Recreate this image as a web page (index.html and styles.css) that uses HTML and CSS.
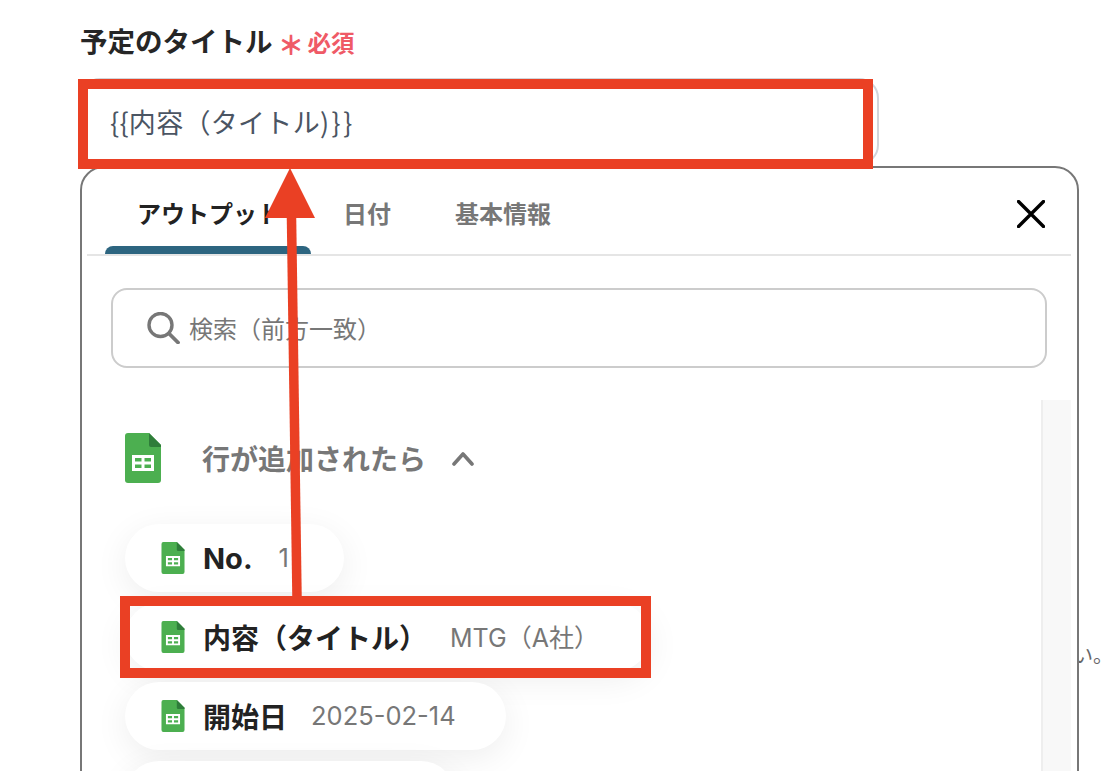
FILE: index.html
```html
<!DOCTYPE html>
<html lang="ja">
<head>
<meta charset="utf-8">
<title>予定のタイトル</title>
<link rel="stylesheet" href="styles.css">
</head>
<body>
<svg class="defs" width="0" height="0" aria-hidden="true">
  <symbol id="sheet" viewBox="0 0 36 50">
    <path d="M3 0H24L36 12V47a3 3 0 0 1-3 3H3a3 3 0 0 1-3-3V3a3 3 0 0 1 3-3Z" fill="#4caf50"/>
    <path d="M24 0L36 12V14H26a2 2 0 0 1-2-2Z" fill="#2f7d3a"/>
    <path d="M7 22H29V38H7ZM10 25V28.500H16.500V25ZM19.500 25V28.500H26V25ZM10 31.500V35H16.500V31.500ZM19.500 31.500V35H26V31.500Z" fill="#fff" fill-rule="evenodd"/>
  </symbol>
</svg>
<div class="behind-text">い。</div>
<main class="page">
  <div class="field-label">
    <span class="label-text">予定のタイトル</span>
    <span class="req-mark">＊</span>
    <span class="req-text">必須</span>
  </div>
  <div class="title-input"><span>{{内容（タイトル<span class="tail">)}}</span></span></div>
  <section class="panel">
    <header class="tabs">
      <div class="tab tab-active">アウトプット</div>
      <div class="tab">日付</div>
      <div class="tab">基本情報</div>
      <svg class="close" width="28" height="28" viewBox="0 0 28 28"><path d="M1.500 1.500L26.500 26.500M26.500 1.500L1.500 26.500" stroke="#000" stroke-width="3.400" stroke-linecap="round"/></svg>
    </header>
    <div class="search">
      <svg class="search-icon" width="33" height="32" viewBox="0 0 33 32"><circle cx="13.500" cy="13" r="11.500" fill="none" stroke="#777" stroke-width="3.400"/><path d="M22 21.500L31 30.500" stroke="#777" stroke-width="3.800" stroke-linecap="round"/></svg>
      <span class="search-text">検索（前方一致）</span>
    </div>
    <div class="list-area">
      <div class="list">
        <div class="group-head">
          <svg class="group-icon" width="36" height="50"><use href="#sheet"/></svg>
          <span class="group-title">行が追加されたら</span>
          <svg class="chevron" width="24" height="16" viewBox="0 0 24 16"><path d="M3 14L12 4L21 14" fill="none" stroke="#777" stroke-width="3.600" stroke-linecap="round" stroke-linejoin="round"/></svg>
        </div>
        <div class="pill pill-no">
          <svg class="pill-icon" width="24" height="32"><use href="#sheet"/></svg>
          <b class="pill-name">No.</b><span class="pill-value">1</span>
        </div>
        <div class="pill pill-title">
          <svg class="pill-icon" width="24" height="32"><use href="#sheet"/></svg>
          <b class="pill-name">内容（タイトル）</b><span class="pill-value">MTG（A社）</span>
        </div>
        <div class="pill pill-date">
          <svg class="pill-icon" width="24" height="32"><use href="#sheet"/></svg>
          <b class="pill-name">開始日</b><span class="pill-value">2025-02-14</span>
        </div>
        <div class="pill pill-next"></div>
      </div>
      <div class="scroll-track"></div>
    </div>
  </section>
</main>
<div class="mark mark-top"></div>
<div class="mark mark-bottom"></div>
<svg class="arrow" width="60" height="432" viewBox="0 0 60 432"><path d="M26.500 50L32 429" stroke="#ea4024" stroke-width="9.500"/><path d="M25 0L50 50H0Z" fill="#ea4024"/></svg>
</body>
</html>
```
FILE: styles.css
```css
* { box-sizing: border-box; }
html, body { margin: 0; height: 771px; overflow: hidden; background: #fff; }
body {
  position: relative;
  font-family: "Inter", "Noto Sans CJK JP", sans-serif;
  color: #222;
}
.defs { position: absolute; }
.page { position: relative; padding: 24px 25px 0 80px; }

.field-label { display: flex; align-items: center; height: 36px; }
.label-text { font-size: 27.500px; font-weight: 700; line-height: 36px; color: #262626; }
.req-mark { margin: 8px 4px 0 6px; font-size: 26px; line-height: 30px; font-weight: 900; color: #ef5a66; width: 25px; display: flex; justify-content: center; }
.req-text { font-size: 23.500px; font-weight: 700; color: #ef5a66; }

.title-input {
  margin-top: 18px;
  width: 799px;
  height: 87px;
  border: 2px solid #d1d5db;
  border-radius: 20px;
  padding: 0 28px;
  display: flex;
  align-items: center;
  font-family: "Noto Sans CJK JP", sans-serif;
  font-size: 27px;
  letter-spacing: 0.3px;
  color: #4b5563;
}
.tail { letter-spacing: 2.500px; }

.panel {
  margin-top: 1px;
  height: 640px;
  border: 2px solid #777;
  border-radius: 24px;
  padding: 0 6px 0 5px;
  background: #fff;
}
.tabs {
  display: flex;
  align-items: center;
  height: 88px;
  padding: 0 18px;
  border-bottom: 2px solid #e5e5e5;
  position: relative;
}
.tab {
  height: 86px;
  display: flex;
  align-items: center;
  padding: 2px 32px 0;
  font-size: 24px;
  font-weight: 700;
  color: #777;
}
.tab-active { color: #222; position: relative; padding-right: 30px; }
.tab-active::after {
  content: "";
  position: absolute;
  left: 0;
  right: 0;
  bottom: 0;
  height: 8px;
  background: #2d6580;
  border-radius: 8px 8px 0 0;
}
.close { margin-left: auto; margin-right: 8px; margin-top: 6px; }

.search {
  margin: 32px 24px 0 24px;
  height: 80px;
  border: 2px solid #ccc;
  border-radius: 16px;
  display: flex;
  align-items: center;
  padding: 0 34px;
  gap: 9px;
  font-size: 24px;
  color: #777;
}
.search-text { margin-bottom: 2px; }

.list-area { display: flex; margin-top: 32px; }
.list { flex: 1; padding: 33px 0 0 38px; min-width: 0; }
.scroll-track {
  width: 30px;
  height: 400px;
  background: #f8f8f8;
  border-left: 2px solid #eee;
}

.group-head { display: flex; align-items: center; height: 50px; margin-bottom: 41px; }
.group-title { margin-left: 41px; font-size: 28px; font-weight: 700; color: #777; }
.chevron { margin-left: 25px; }

.pill {
  display: flex;
  align-items: center;
  height: 68px;
  padding: 0 38px 0 36px;
  margin-bottom: 11px;
  border-radius: 34px;
  background: #fff;
  box-shadow: 0 8px 34px rgba(0, 0, 0, 0.07);
}
.pill-icon { flex: none; }
.pill-name { margin-left: 18px; font-size: 28px; font-weight: 700; color: #222; white-space: nowrap; }
.pill-value { margin-left: 24px; margin-bottom: 2px; font-size: 25.500px; color: #777; white-space: nowrap; }
.pill-no .pill-name { font-size: 29px; }
.pill-no { width: 219px; }
.pill-no .pill-value { margin-left: 26px; }
.pill-title { width: 525px; }
.pill-title .pill-value { margin-left: 23px; font-size: 25px; }
.pill-date { width: 381px; }
.pill-next { width: 330px; }

.behind-text {
  position: absolute;
  left: 1073px;
  top: 640px;
  font-size: 20px;
  color: #666;
  white-space: nowrap;
}
.mark { position: absolute; border: 10px solid #ea4024; }
.mark-top { left: 78px; top: 79px; width: 795px; height: 90px; }
.mark-bottom { left: 120px; top: 596px; width: 531px; height: 82px; }
.arrow { position: absolute; left: 265px; top: 168px; }
```
